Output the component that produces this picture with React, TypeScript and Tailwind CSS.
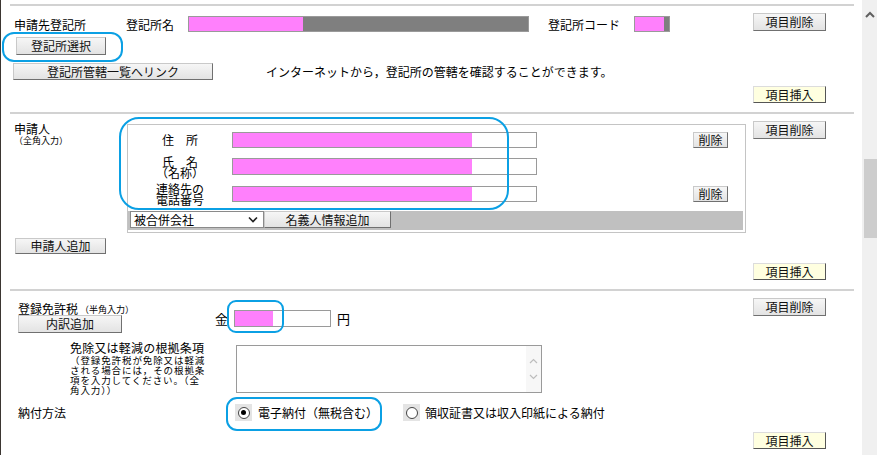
const btn =
  "flex items-center justify-center bg-gradient-to-b from-[#f6f6f6] to-[#e3e3e3] border border-[#c9c9c9] border-r-[#707070] border-b-[#707070] text-[12px] leading-none text-[#111]";
const yellowBtn =
  "flex items-center justify-center bg-[#ffffe0] border border-[#dcdcdc] border-r-[#555] border-b-[#555] text-[12px] leading-none text-[#111]";
const pink = "bg-[#ff80fc]";
const ring = "absolute border-[2.5px] border-[#0ba0e4] pointer-events-none";

function Radio({ checked }: { checked?: boolean }) {
  return (
    <div className="w-[17px] h-[17px] bg-[#e4e4e4] flex items-center justify-center">
      <div className="w-[12px] h-[12px] rounded-full border border-[#444] bg-white flex items-center justify-center">
        {checked && <div className="w-[5px] h-[5px] rounded-full bg-black" />}
      </div>
    </div>
  );
}

export default function App() {
  return (
    <div className="relative flex w-[877px] h-[455px] overflow-hidden bg-white text-black leading-none font-['Noto_Sans_CJK_JP',sans-serif]">
      <div className="w-[1px] bg-[#3b3632]" />

      <main className="w-[861px] pl-[9px] pr-[8px] pt-[4px]">
        {/* 申請先登記所 */}
        <section className="border-t-2 border-[#d2d2d2] pl-[4px] pr-[28px] pb-[9px]">
          <div className="flex items-start h-[20px] mt-[7px] text-[12px]">
            <span className="w-[112px] mt-[4px] leading-[16px]">申請先登記所</span>
            <span className="w-[62px] mt-[4px] leading-[16px]">登記所名</span>
            <div className="w-[341px] h-[16px] mt-[3px] flex border border-[#9a9a9a] bg-[#7f7f7f]">
              <div className={`w-[114px] ${pink}`} />
            </div>
            <span className="ml-[19px] w-[86px] mt-[4px] leading-[16px]">登記所コード</span>
            <div className="w-[36px] h-[16px] mt-[3px] flex border border-[#9a9a9a] bg-[#7f7f7f]">
              <div className={`w-[29px] ${pink}`} />
            </div>
            <div className={`${btn} ml-auto w-[73px] h-[18px]`}>項目削除</div>
          </div>
          <div className={`${btn} mt-[4px] ml-[2px] w-[90px] h-[18px]`}>登記所選択</div>
          <div className="flex items-center mt-[8px] h-[17px]">
            <div className={`${btn} ml-[-1px] w-[200px] h-[17px]`}>登記所管轄一覧へリンク</div>
            <span className="ml-[53px] text-[12px]">
              インターネットから，登記所の管轄を確認することができます。
            </span>
          </div>
          <div className="flex justify-end mt-[6px]">
            <div className={`${yellowBtn} w-[73px] h-[17px]`}>項目挿入</div>
          </div>
        </section>

        {/* 申請人 */}
        <section className="border-t-2 border-[#d2d2d2] pl-[4px] pr-[28px] pb-[9px]">
          <div className="flex items-start">
            <div className="w-[113px] mt-[8px]">
              <div className="text-[12px] leading-[14px]">申請人</div>
              <div className="text-[9px] leading-[10px]">（全角入力）</div>
            </div>
            <div className="w-[619px] h-[109px] mt-[10px] border border-[#c4c4c4] text-[12px]">
              <div className="flex items-center h-[16px] mt-[7px]">
                <span className="w-[104px] text-center">住　所</span>
                <div className="w-[305px] h-[16px] flex border border-[#9a9a9a] bg-white">
                  <div className={`w-[239px] ${pink}`} />
                </div>
                <div className={`${btn} ml-[156px] w-[35px] h-[16px]`}>削除</div>
              </div>
              <div className="flex items-center h-[17px] mt-[10px]">
                <span className="w-[104px] text-center leading-[11px]">
                  氏　名
                  <br />
                  （名称）
                </span>
                <div className="w-[305px] h-[17px] flex border border-[#9a9a9a] bg-white">
                  <div className={`w-[239px] ${pink}`} />
                </div>
              </div>
              <div className="flex items-center h-[16px] mt-[11px]">
                <span className="w-[104px] text-center leading-[11px]">
                  連絡先の
                  <br />
                  電話番号
                </span>
                <div className="w-[305px] h-[16px] flex border border-[#9a9a9a] bg-white">
                  <div className={`w-[239px] ${pink}`} />
                </div>
                <div className={`${btn} ml-[156px] w-[35px] h-[16px]`}>削除</div>
              </div>
              <div className="flex items-start h-[19px] mt-[9px] mr-[2px] bg-[#c0c0c0]">
                <div className="ml-[2px] w-[134px] h-[17px] flex items-center justify-between pl-[3px] pr-[5px] bg-white border border-[#8a8a8a]">
                  <span>被合併会社</span>
                  <svg width="10" height="7" viewBox="0 0 10 7">
                    <path d="M1 1.5l4 4 4-4" fill="none" stroke="#222" strokeWidth="1.6" />
                  </svg>
                </div>
                <div className={`${btn} w-[127px] h-[17px]`}>名義人情報追加</div>
              </div>
            </div>
            <div className={`${btn} ml-[7px] mt-[7px] w-[73px] h-[18px]`}>項目削除</div>
          </div>
          <div className={`${btn} mt-[5px] ml-[1px] w-[91px] h-[16px]`}>申請人追加</div>
          <div className="flex justify-end mt-[9px]">
            <div className={`${yellowBtn} w-[73px] h-[17px]`}>項目挿入</div>
          </div>
        </section>

        {/* 登録免許税 */}
        <section className="border-t-2 border-[#d2d2d2] pl-[8px] pr-[28px] text-[12px]">
          <div className="flex items-start">
            <div className="w-[197px] pt-[11px]">
              <div className="flex items-end h-[13px]">
                <span className="leading-[13px]">登録免許税</span>
                <span className="ml-[2px] text-[9px] leading-[11px]">（半角入力）</span>
              </div>
              <div className={`${btn} w-[104px] h-[18px]`}>内訳追加</div>
            </div>
            <div className="flex items-center h-[17px] mt-[19px]">
              <span className="w-[19px] text-[13px]">金</span>
              <div className="w-[97px] h-[17px] flex border border-[#9a9a9a] bg-white">
                <div className={`w-[38px] ${pink}`} />
              </div>
              <span className="ml-[6px] text-[13px]">円</span>
            </div>
            <div className={`${btn} ml-auto mt-[7px] w-[73px] h-[18px]`}>項目削除</div>
          </div>

          <div className="flex items-start mt-[8px]">
            <div className="ml-[52px] w-[166px] whitespace-nowrap">
              <div className="leading-[14px] tracking-[0.2px]">免除又は軽減の根拠条項</div>
              <div className="text-[9.5px] leading-[10px] tracking-[0.9px]">
                （登録免許税が免除又は軽減
                <br />
                される場合には，その根拠条
                <br />
                項を入力してください。（全
                <br />
                角入力））
              </div>
            </div>
            <div className="mt-[4px] w-[306px] h-[48px] flex justify-end border border-[#9a9a9a] bg-white">
              <div className="w-[15px] h-full bg-[#f7f7f7] flex flex-col items-center justify-center gap-[10px]">
                <svg width="9" height="6" viewBox="0 0 9 6">
                  <path d="M1 5l3.5-3.5L8 5" fill="none" stroke="#bdbdbd" strokeWidth="1.2" />
                </svg>
                <svg width="9" height="6" viewBox="0 0 9 6">
                  <path d="M1 1l3.5 3.5L8 1" fill="none" stroke="#bdbdbd" strokeWidth="1.2" />
                </svg>
              </div>
            </div>
          </div>

          <div className="flex items-center h-[17px] mt-[9px]">
            <span className="w-[217px]">納付方法</span>
            <Radio checked />
            <span className="ml-[6px] w-[145px]">電子納付（無税含む）</span>
            <Radio />
            <span className="ml-[5px]">領収証書又は収入印紙による納付</span>
          </div>
          <div className="flex justify-end mt-[11px]">
            <div className={`${yellowBtn} w-[73px] h-[17px]`}>項目挿入</div>
          </div>
        </section>
      </main>

      {/* scrollbar */}
      <div className="w-[15px] bg-[#f0f0f0] flex flex-col items-center">
        <svg className="mt-[11px]" width="10" height="7" viewBox="0 0 10 7">
          <path d="M1 6l4-4 4 4" fill="none" stroke="#606060" strokeWidth="2" />
        </svg>
        <div className="mt-[141px] ml-[1px] w-[13px] h-[79px] bg-[#cdcdcd]" />
      </div>

      {/* annotations */}
      <div className={`${ring} left-[2px] top-[32px] w-[121px] h-[30px] rounded-[12px]`} />
      <div className={`${ring} left-[119px] top-[117px] w-[390px] h-[93px] rounded-[20px]`} />
      <div className={`${ring} left-[227px] top-[300px] w-[57px] h-[33px] rounded-[9px]`} />
      <div className={`${ring} left-[226px] top-[397px] w-[156px] h-[34px] rounded-[11px]`} />
    </div>
  );
}
